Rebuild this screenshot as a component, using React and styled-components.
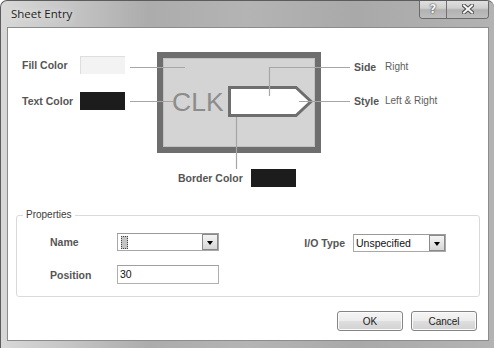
import React from "react";
import styled, { createGlobalStyle } from "styled-components";

const GlobalStyle = createGlobalStyle`
  html, body {
    margin: 0;
    padding: 0;
    background: #ffffff;
  }
  body {
    font-family: "Liberation Sans", Arial, sans-serif;
  }
`;

const Window = styled.div`
  width: 494px;
  height: 348px;
  box-sizing: border-box;
  display: flex;
  flex-direction: column;
  border: 1px solid #5c5c5c;
  border-right: none;
  border-bottom: none;
  border-radius: 7px 7px 0 0;
  padding: 0 5px 7px 6px;
  overflow: hidden;
  background: linear-gradient(
    90deg,
    #d8d8d8 0%,
    #c8c8c8 12%,
    #acacac 30%,
    #b4b4b4 50%,
    #a9a9a9 72%,
    #b3b3b3 100%
  );
`;

const TitleBar = styled.div`
  height: 26px;
  display: flex;
  justify-content: space-between;
  align-items: flex-start;
`;

const Title = styled.div`
  padding-left: 4px;
  line-height: 26px;
  font-family: "Open Sans", "Noto Sans", sans-serif;
  font-size: 11.5px;
  color: #1e1e1e;
  text-shadow: 0 0 6px rgba(255, 255, 255, 0.9);
`;

const CaptionButtons = styled.div`
  display: flex;
  margin-top: -1px;
  height: 18px;
  border: 1px solid #6a6a6a;
  border-top: none;
  border-radius: 0 0 4px 4px;
  overflow: hidden;
`;

const CaptionButton = styled.div`
  width: ${(p) => p.$w}px;
  height: 18px;
  display: flex;
  align-items: center;
  justify-content: center;
  background: linear-gradient(180deg, #e2e2e2 0%, #cfcfcf 45%, #b2b2b2 55%, #bdbdbd 100%);
  border-left: ${(p) => (p.$sep ? "1px solid #707070" : "none")};
  color: #f4f4f4;
  font-family: "DejaVu Sans", sans-serif;
  font-weight: bold;
  font-size: 12px;
  text-shadow: 0 0 1px #333, 0 0 2px #555;
`;

const Client = styled.div`
  flex: 1;
  display: flex;
  flex-direction: column;
  background: #ffffff;
  border: 1px solid #8c8c8c;
  padding-top: 22px;
  color: #505050;
`;

const Diagram = styled.div`
  display: flex;
  align-items: flex-start;
  padding-left: 14px;
  height: 119px;
`;

const SwatchGrid = styled.div`
  display: grid;
  grid-template-columns: 53px 45px;
  column-gap: 5px;
  row-gap: 18px;
  padding-top: 6px;
  align-items: center;
`;

const Label = styled.span`
  font-weight: bold;
  font-size: 10.5px;
  color: #555555;
  white-space: nowrap;
`;

const Swatch = styled.div`
  width: 45px;
  height: 18px;
  box-sizing: border-box;
  background: ${(p) => p.$color};
  border-top: 1px solid ${(p) => (p.$light ? "#dedede" : p.$color)};
  border-left: 1px solid ${(p) => (p.$light ? "#dedede" : p.$color)};
`;

const Drawing = styled.svg`
  display: block;
  margin-left: 1px;
  flex-shrink: 0;
`;

const SideGrid = styled.div`
  display: grid;
  grid-template-columns: 31px auto;
  row-gap: 20px;
  padding-top: 10px;
  margin-left: 3px;
  line-height: 14px;
`;

const Value = styled.span`
  font-size: 10px;
  color: #5e5e5e;
  white-space: nowrap;
`;

const BorderRow = styled.div`
  display: flex;
  align-items: center;
  gap: 8px;
  margin-left: 170px;
  height: 18px;
`;

const Group = styled.fieldset`
  margin: 22px 8px 0 8px;
  padding: 12px 0 12px 0;
  border: 1px solid #dadada;
  border-radius: 3px;
  min-width: 0;
`;

const Legend = styled.legend`
  margin-left: 6px;
  padding: 0 3px;
  font-size: 10px;
  line-height: 12px;
  color: #3c3c3c;
`;

const GroupBody = styled.div`
  display: flex;
  justify-content: space-between;
  align-items: flex-start;
  padding: 0 33px;
`;

const FieldGrid = styled.div`
  display: grid;
  grid-template-columns: 67px 102px;
  row-gap: 14px;
  align-items: center;
`;

const InlineField = styled.div`
  display: flex;
  align-items: center;
  gap: 8px;
  margin-top: 1px;
`;

const Combo = styled.div`
  width: ${(p) => p.$w}px;
  height: 18px;
  box-sizing: border-box;
  display: flex;
  align-items: center;
  border: 1px solid #a8a8a8;
  border-top-color: #9a9a9a;
  background: #ffffff;
  padding: 0 0 0 1px;
  font-size: 10.5px;
  color: #111;
`;

const ComboText = styled.div`
  flex: 1;
  padding-left: 1px;
  display: flex;
  align-items: center;
`;

const Caret = styled.span`
  display: inline-block;
  width: 5px;
  height: 11px;
  margin-left: 1px;
  background: #c4c4c4;
  border: 1px dotted #444;
`;

const DropButton = styled.div`
  width: 16px;
  height: 16px;
  box-sizing: border-box;
  border: 1px solid #8a8a8a;
  background: linear-gradient(180deg, #f4f4f4 0%, #e6e6e6 50%, #d6d6d6 100%);
  display: flex;
  align-items: center;
  justify-content: center;
`;

const Arrow = styled.span`
  width: 0;
  height: 0;
  border-left: 3.5px solid transparent;
  border-right: 3.5px solid transparent;
  border-top: 4px solid #000;
  margin-top: 1px;
`;

const TextInput = styled.div`
  width: 102px;
  height: 19px;
  box-sizing: border-box;
  border: 1px solid #b0b0b0;
  border-top-color: #a0a0a0;
  padding-left: 2px;
  font-size: 10.5px;
  line-height: 17px;
  color: #111;
`;

const Footer = styled.div`
  display: flex;
  justify-content: flex-end;
  gap: 8px;
  margin-top: 14px;
  padding-right: 11px;
`;

const Button = styled.div`
  width: 66px;
  height: 20px;
  box-sizing: border-box;
  border: 1px solid #858585;
  border-radius: 3px;
  background: linear-gradient(180deg, #f5f5f5 0%, #ececec 48%, #dedede 52%, #d2d2d2 100%);
  box-shadow: inset 0 0 0 1px #fbfbfb;
  display: flex;
  align-items: center;
  justify-content: center;
  font-size: 10px;
  color: #1a1a1a;
`;

const CloseGlyph = () => (
  <svg width="12" height="10" viewBox="0 0 12 10">
    <path d="M2 1.5 L10 8.5 M10 1.5 L2 8.5" stroke="#4a4a4a" strokeWidth="4" strokeLinecap="square" />
    <path d="M2 1.5 L10 8.5 M10 1.5 L2 8.5" stroke="#f6f6f6" strokeWidth="2" strokeLinecap="square" />
  </svg>
);

const DiagramDrawing = () => (
  <Drawing width="225" height="119" viewBox="0 0 225 119">
    <rect x="34" y="5" width="158" height="95" fill="#d4d4d4" stroke="#6e6e6e" strokeWidth="6" />
    <rect x="37.5" y="8.5" width="151" height="88" fill="none" stroke="#c2c2c2" strokeWidth="1" />
    <line x1="4" y1="17.5" x2="59" y2="17.5" stroke="#a6a6a6" strokeWidth="1.2" />
    <line x1="4" y1="51.5" x2="47" y2="51.5" stroke="#a6a6a6" strokeWidth="1.2" />
    <text
      x="46"
      y="61"
      fontFamily="Liberation Sans, Arial, sans-serif"
      fontSize="26.5"
      fill="#8c8c8c"
    >
      CLK
    </text>
    <polygon
      points="103.5,37.5 170,37.5 185,51.5 170,65.5 103.5,65.5"
      fill="#ffffff"
      stroke="#6e6e6e"
      strokeWidth="3"
    />
    <polyline points="143.5,46 143.5,17.5 224,17.5" fill="none" stroke="#a6a6a6" strokeWidth="1.2" />
    <line x1="173" y1="51.5" x2="224" y2="51.5" stroke="#a6a6a6" strokeWidth="1.2" />
    <line x1="110.5" y1="67" x2="110.5" y2="119" stroke="#a6a6a6" strokeWidth="1.2" />
  </Drawing>
);

export default function App() {
  return (
    <>
      <GlobalStyle />
      <Window>
        <TitleBar>
          <Title>Sheet Entry</Title>
          <CaptionButtons>
            <CaptionButton $w={26}>?</CaptionButton>
            <CaptionButton $w={41} $sep>
              <CloseGlyph />
            </CaptionButton>
          </CaptionButtons>
        </TitleBar>
        <Client>
          <Diagram>
            <SwatchGrid>
              <Label>Fill Color</Label>
              <Swatch $color="#f3f3f3" $light />
              <Label>Text Color</Label>
              <Swatch $color="#1c1c1c" />
            </SwatchGrid>
            <DiagramDrawing />
            <SideGrid>
              <Label>Side</Label>
              <Value>Right</Value>
              <Label>Style</Label>
              <Value>Left &amp; Right</Value>
            </SideGrid>
          </Diagram>
          <BorderRow>
            <Label>Border Color</Label>
            <Swatch $color="#1c1c1c" />
          </BorderRow>
          <Group>
            <Legend>Properties</Legend>
            <GroupBody>
              <FieldGrid>
                <Label>Name</Label>
                <Combo $w={102}>
                  <ComboText>
                    <Caret />
                  </ComboText>
                  <DropButton>
                    <Arrow />
                  </DropButton>
                </Combo>
                <Label>Position</Label>
                <TextInput>30</TextInput>
              </FieldGrid>
              <InlineField>
                <Label>I/O Type</Label>
                <Combo $w={93}>
                  <ComboText>Unspecified</ComboText>
                  <DropButton>
                    <Arrow />
                  </DropButton>
                </Combo>
              </InlineField>
            </GroupBody>
          </Group>
          <Footer>
            <Button>OK</Button>
            <Button>Cancel</Button>
          </Footer>
        </Client>
      </Window>
    </>
  );
}
